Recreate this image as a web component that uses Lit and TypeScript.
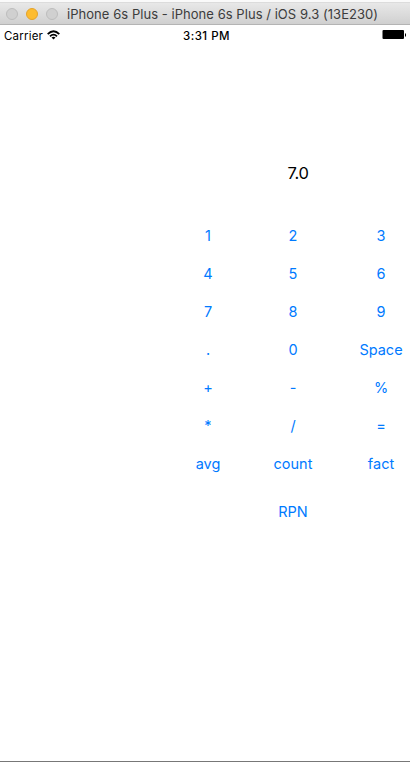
import { LitElement, html, css, svg } from "lit";
import { customElement } from "lit/decorators.js";

const KEYS = [
  "1", "2", "3",
  "4", "5", "6",
  "7", "8", "9",
  ".", "0", "Space",
  "+", "-", "%",
  "*", "/", "=",
  "avg", "count", "fact",
];

@customElement("window-bar")
class WindowBar extends LitElement {
  static styles = css`
    :host {
      display: flex;
      align-items: center;
      box-sizing: border-box;
      height: 25px;
      padding: 4px 0 0 6px;
      background: linear-gradient(#fafafa 0 2px, #dcdcdc 2px 3px, #e8e8e8 3px, #d0d0d0 24px, #b4b4b4 24px);
    }
    .light {
      flex: none;
      box-sizing: border-box;
      width: 12px;
      height: 12px;
      margin: 0 8px 1px 0;
      border: 1px solid #bdbdbd;
      border-radius: 50%;
      background: #d0d0d0;
    }
    .amber {
      background: #fdbc30;
      border-color: #e5a32a;
    }
    .title {
      margin: 0 0 2px 1px;
      color: #3c3c3c;
      font-size: 13px;
      line-height: 20px;
      letter-spacing: 0.045px;
      white-space: nowrap;
    }
  `;
  render() {
    return html`
      <span class="light"></span><span class="light amber"></span><span class="light"></span>
      <span class="title">iPhone 6s Plus - iPhone 6s Plus / iOS 9.3 (13E230)</span>
    `;
  }
}

@customElement("status-bar")
class StatusBar extends LitElement {
  static styles = css`
    :host {
      display: grid;
      grid-template-columns: 1fr auto 1fr;
      align-items: center;
      height: 20px;
      padding: 0 3px 0 4px;
      font-size: 12px;
      line-height: 20px;
      color: #000;
    }
    .left { display: flex; align-items: center; gap: 4px; }
    .carrier { margin: 1px 0 -1px; font-size: 11.5px; letter-spacing: 0.2px; }
    .time { margin: 1px 0 -1px 2px; font-size: 11.5px; font-weight: 500; letter-spacing: 0.5px; }
    .right { display: flex; justify-content: flex-end; }
    svg { display: block; }
  `;
  render() {
    return html`
      <div class="left">
        <span class="carrier">Carrier</span>
        <svg width="13" height="10" viewBox="0 0 13 10">
          ${svg`<g fill="none" stroke="#000" stroke-width="1.8">
            <path d="M0.7 4.1 Q6.5 -1.7 12.3 4.1"/>
            <path d="M3 6.4 Q6.5 2.9 10 6.4"/>
          </g>
          <path d="M4.5 7.5 Q6.5 6 8.5 7.5 L6.5 9.6Z"/>`}
        </svg>
      </div>
      <span class="time">3:31 PM</span>
      <div class="right">
        <svg width="25" height="10" viewBox="0 0 25 10">
          <rect x="0.5" y="0" width="21.5" height="9" rx="1"/>
          <rect x="23" y="3.5" width="1" height="3"/>
        </svg>
      </div>
    `;
  }
}

@customElement("app-root")
class AppRoot extends LitElement {
  static styles = css`
    :host {
      display: flex;
      flex-direction: column;
      box-sizing: border-box;
      width: 410px;
      height: 762px;
      overflow: hidden;
      background: #fff;
      border-bottom: 1px solid #777;
      font-family: Inter, "Liberation Sans", sans-serif;
    }
    .pad {
      display: grid;
      grid-template-columns: 84px 86px 90px;
      grid-auto-rows: 38px;
      margin: 109px 0 0 166px;
      width: 260px;
      justify-items: center;
      align-items: center;
    }
    .readout {
      grid-column: 2;
      margin-left: 10px;
      color: #000;
      font-size: 16.5px;
      letter-spacing: -0.4px;
    }
    .keys {
      display: grid;
      grid-template-columns: subgrid;
      grid-column: 1 / -1;
      grid-auto-rows: 38px;
      justify-items: center;
      margin-top: 25px;
      align-self: start;
    }
    .key {
      border: 0;
      padding: 0;
      background: none;
      color: #007aff;
      font: inherit;
      font-size: 14.5px;
      line-height: 38px;
      white-space: nowrap;
    }
    .mode {
      grid-column: 2;
      margin-top: 10px;
    }
  `;
  render() {
    return html`
      <window-bar></window-bar>
      <status-bar></status-bar>
      <main class="pad">
        <output class="readout">7.0</output>
        <div class="keys">
          ${KEYS.map((k) => html`<button class="key">${k}</button>`)}
          <button class="key mode">RPN</button>
        </div>
      </main>
    `;
  }
}
